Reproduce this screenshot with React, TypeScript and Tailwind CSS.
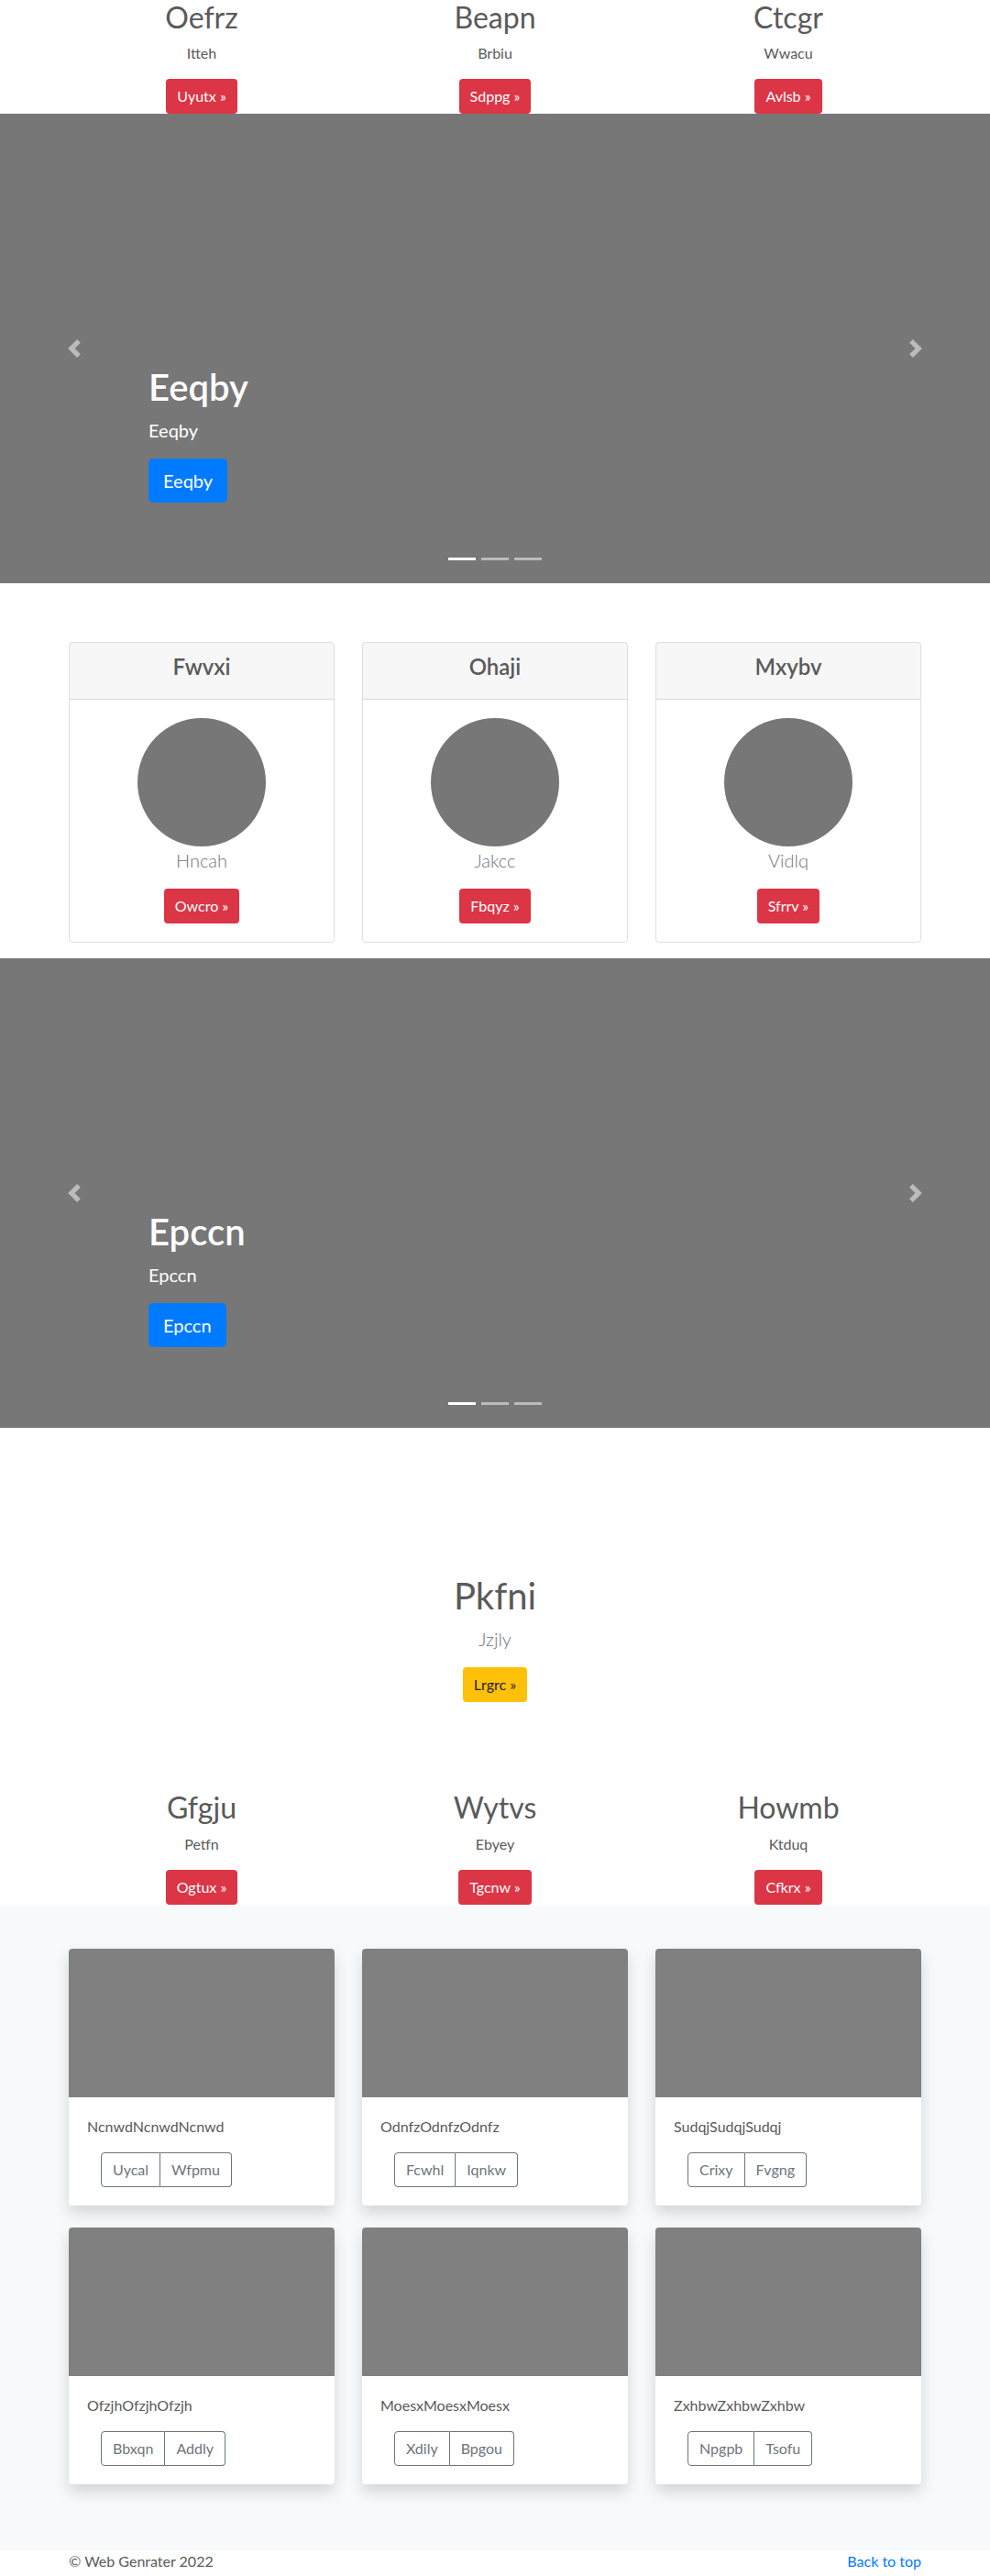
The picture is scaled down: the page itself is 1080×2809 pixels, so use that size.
const marketingTop = [
  { title: "Oefrz", text: "Itteh", btn: "Uyutx" },
  { title: "Beapn", text: "Brbiu", btn: "Sdppg" },
  { title: "Ctcgr", text: "Wwacu", btn: "Avlsb" },
];

const marketingBottom = [
  { title: "Gfgju", text: "Petfn", btn: "Ogtux" },
  { title: "Wytvs", text: "Ebyey", btn: "Tgcnw" },
  { title: "Howmb", text: "Ktduq", btn: "Cfkrx" },
];

const people = [
  { title: "Fwvxi", name: "Hncah", btn: "Owcro" },
  { title: "Ohaji", name: "Jakcc", btn: "Fbqyz" },
  { title: "Mxybv", name: "Vidlq", btn: "Sfrrv" },
];

const albums = [
  { text: "NcnwdNcnwdNcnwd", a: "Uycal", b: "Wfpmu" },
  { text: "OdnfzOdnfzOdnfz", a: "Fcwhl", b: "Iqnkw" },
  { text: "SudqjSudqjSudqj", a: "Crixy", b: "Fvgng" },
  { text: "OfzjhOfzjhOfzjh", a: "Bbxqn", b: "Addly" },
  { text: "MoesxMoesxMoesx", a: "Xdily", b: "Bpgou" },
  { text: "ZxhbwZxhbwZxhbw", a: "Npgpb", b: "Tsofu" },
];

const RedButton = ({ label }: { label: string }) => (
  <a className="inline-block bg-[#dc3545] text-white rounded px-3 py-[7px] text-base leading-6">
    {label} &raquo;
  </a>
);

const Marketing = ({ items }: { items: typeof marketingTop }) => (
  <div className="w-[960px] mx-auto flex">
    {items.map((it) => (
      <div key={it.title} className="w-[320px] px-[15px] text-center">
        <h2 className="text-[32px] leading-[1.2] mb-2">{it.title}</h2>
        <p className="text-base leading-6 mb-4 mx-3">{it.text}</p>
        <RedButton label={it.btn} />
      </div>
    ))}
  </div>
);

const Chevron = ({ flip }: { flip?: boolean }) => (
  <svg viewBox="0 0 8 8" className={flip ? "w-5 h-5 rotate-180" : "w-5 h-5"} fill="#fff">
    <path d="M5.25 0l-4 4 4 4 1.5-1.5L4.25 4l2.5-2.5L5.25 0z" />
  </svg>
);

const Carousel = ({ title }: { title: string }) => (
  <div className="relative h-[512px] bg-[#777] text-white">
    <div className="flex flex-col items-start pt-[274px] pl-[162px]">
      <h1 className="text-[40px] leading-[1.2] font-semibold mb-2">{title}</h1>
      <p className="text-xl leading-[30px] mb-4">{title}</p>
      <a className="bg-[#007bff] rounded-[5px] px-4 py-[9px] text-xl leading-[30px]">{title}</a>
    </div>
    <div className="absolute left-0 top-0 bottom-0 w-[162px] flex items-center justify-center opacity-50">
      <Chevron />
    </div>
    <div className="absolute right-0 top-0 bottom-0 w-[162px] flex items-center justify-center opacity-50">
      <Chevron flip />
    </div>
    <div className="absolute bottom-[25px] left-0 right-0 flex justify-center gap-[6px]">
      <span className="w-[30px] h-[3px] bg-white" />
      <span className="w-[30px] h-[3px] bg-white/50" />
      <span className="w-[30px] h-[3px] bg-white/50" />
    </div>
  </div>
);

const People = () => (
  <div className="w-[960px] mx-auto flex pt-16 pb-[17px]">
    {people.map((p) => (
      <div key={p.title} className="w-[320px] px-[15px]">
        <div className="border border-black/[0.125] rounded text-center">
          <div className="bg-black/[0.03] border-b border-black/[0.125] px-5 py-3">
            <h4 className="text-2xl leading-[1.2] font-semibold mb-2">{p.title}</h4>
          </div>
          <div className="p-5 flex flex-col items-center">
            <div className="w-[140px] h-[140px] rounded-full bg-[#777]" />
            <p className="text-xl leading-[30px] font-light text-[#6c757d] mb-4">{p.name}</p>
            <RedButton label={p.btn} />
          </div>
        </div>
      </div>
    ))}
  </div>
);

const Jumbo = () => (
  <div className="text-center pt-[159px] pb-[96px] flex flex-col items-center">
    <h1 className="text-[40px] leading-[1.2] mb-2">Pkfni</h1>
    <p className="text-xl leading-[30px] font-light text-[#6c757d] mb-4">Jzjly</p>
    <a className="inline-block bg-[#ffc107] text-[#212529] rounded px-3 py-[7px] text-base leading-6">
      Lrgrc &raquo;
    </a>
  </div>
);

const Album = () => (
  <div className="bg-[#f8f9fa] py-12">
    <div className="w-[960px] mx-auto grid grid-cols-3">
      {albums.map((c) => (
        <div key={c.text} className="px-[15px] mb-6">
          <div className="bg-white rounded overflow-hidden shadow-[0_0.5rem_1rem_rgba(0,0,0,0.15)]">
            <div className="h-[162px] bg-[#808080]" />
            <div className="p-5">
              <p className="text-base leading-6 mb-4">{c.text}</p>
              <div className="flex ml-[15px] text-[#6c757d] text-base leading-6">
                <span className="border border-[#6c757d] rounded-l px-3 py-1.5">{c.a}</span>
                <span className="border border-[#6c757d] border-l-0 rounded-r px-3 py-1.5">{c.b}</span>
              </div>
            </div>
          </div>
        </div>
      ))}
    </div>
  </div>
);

export default function App() {
  return (
    <div className="font-['Lato',sans-serif] text-[#5a5a5a] bg-white">
      <Marketing items={marketingTop} />
      <Carousel title="Eeqby" />
      <People />
      <Carousel title="Epccn" />
      <Jumbo />
      <Marketing items={marketingBottom} />
      <Album />
      <footer className="w-[960px] mx-auto px-[15px] flex justify-between text-base leading-6">
        <p>&copy; Web Genrater 2022</p>
        <a className="text-[#007bff]">Back to top</a>
      </footer>
    </div>
  );
}
